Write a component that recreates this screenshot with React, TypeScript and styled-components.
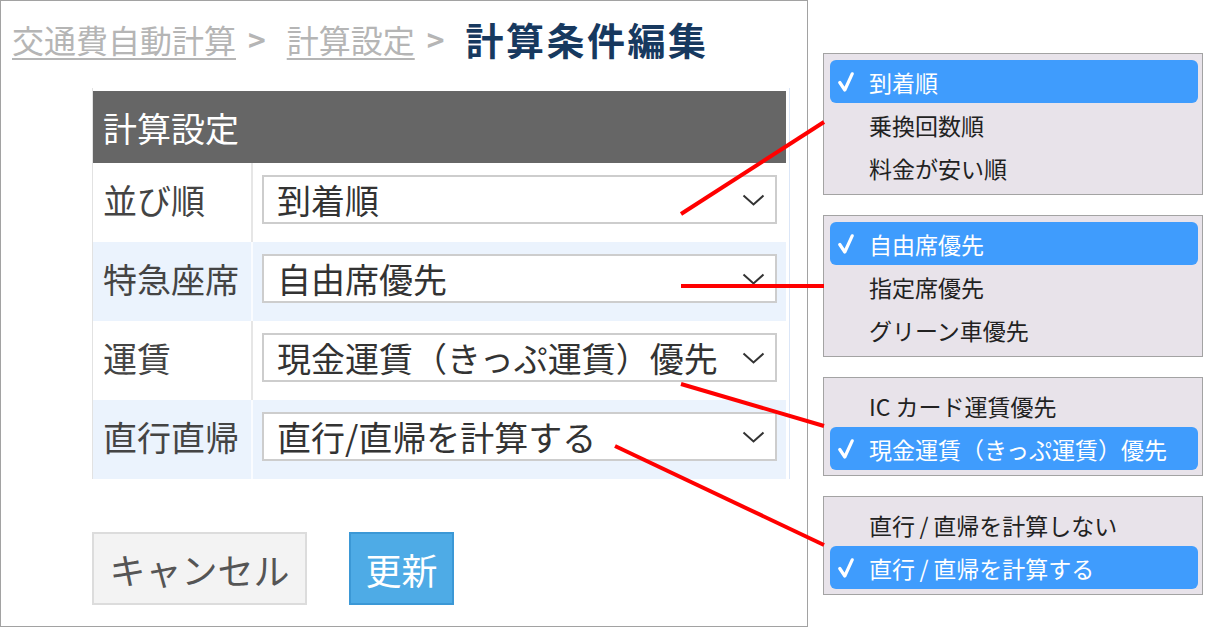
import React from 'react';
import styled, { createGlobalStyle } from 'styled-components';

const jp = `'Noto Sans CJK JP', 'Noto Sans', sans-serif`;

const GlobalStyle = createGlobalStyle`
  html, body {
    margin: 0;
    padding: 0;
    background: #fff;
  }
  body {
    font-family: ${jp};
  }
  * {
    box-sizing: border-box;
  }
`;

interface SettingRow {
  label: string;
  value: string;
  tint: boolean;
}

const rows: SettingRow[] = [
  { label: '並び順', value: '到着順', tint: false },
  { label: '特急座席', value: '自由席優先', tint: true },
  { label: '運賃', value: '現金運賃（きっぷ運賃）優先', tint: false },
  { label: '直行直帰', value: '直行/直帰を計算する', tint: true },
];

interface MenuSpec {
  options: string[];
  selected: number;
}

const menus: MenuSpec[] = [
  { options: ['到着順', '乗換回数順', '料金が安い順'], selected: 0 },
  { options: ['自由席優先', '指定席優先', 'グリーン車優先'], selected: 0 },
  { options: ['IC カード運賃優先', '現金運賃（きっぷ運賃）優先'], selected: 1 },
  { options: ['直行\u2009/\u2009直帰を計算しない', '直行\u2009/\u2009直帰を計算する'], selected: 1 },
];

// leader lines from each select to its open menu
const leaders = [
  { x1: 681, y1: 214, x2: 824, y2: 122 },
  { x1: 681, y1: 286, x2: 824, y2: 286 },
  { x1: 681, y1: 384, x2: 824, y2: 426 },
  { x1: 615, y1: 446, x2: 824, y2: 545 },
];

const Chevron = () => (
  <svg width="23" height="12" viewBox="0 0 23 12" fill="none">
    <polyline points="1.5,1.5 11.5,10.5 21.5,1.5" stroke="#333" strokeWidth="2" />
  </svg>
);

const Check = () => (
  <svg width="16" height="20" viewBox="0 0 16 20" fill="none">
    <polyline
      points="1.8,10.5 6.8,18 14.2,1.8"
      stroke="#fff"
      strokeWidth="3.2"
      strokeLinecap="round"
      strokeLinejoin="round"
    />
  </svg>
);

export default function App() {
  return (
    <>
      <GlobalStyle />
      <Canvas>
        <Panel>
          <Breadcrumb>
            <Crumb>交通費自動計算</Crumb>
            <Sep>&gt;</Sep>
            <Crumb>計算設定</Crumb>
            <Sep>&gt;</Sep>
            <Current>計算条件編集</Current>
          </Breadcrumb>

          <Table>
            <HeaderCell>計算設定</HeaderCell>
            {rows.map((row) => (
              <Row key={row.label} tint={row.tint}>
                <LabelCell tint={row.tint}>{row.label}</LabelCell>
                <ValueCell>
                  <Select>
                    <span>{row.value}</span>
                    <Chevron />
                  </Select>
                </ValueCell>
              </Row>
            ))}
          </Table>

          <Actions>
            <CancelButton type="button">キャンセル</CancelButton>
            <SubmitButton type="button">更新</SubmitButton>
          </Actions>
        </Panel>

        <MenuColumn>
          {menus.map((menu, i) => (
            <Menu key={i}>
              {menu.options.map((option, j) => (
                <MenuItem key={option} selected={j === menu.selected}>
                  <CheckSlot>{j === menu.selected && <Check />}</CheckSlot>
                  {option}
                </MenuItem>
              ))}
            </Menu>
          ))}
        </MenuColumn>

        <Leaders width="1206" height="628" viewBox="0 0 1206 628">
          {leaders.map((l, i) => (
            <line key={i} {...l} stroke="#ff0000" strokeWidth="4" />
          ))}
        </Leaders>
      </Canvas>
    </>
  );
}

const Canvas = styled.div`
  position: relative;
  width: 1206px;
  height: 628px;
  display: flex;
  align-items: flex-start;
  overflow: hidden;
`;

const Panel = styled.div`
  width: 808px;
  height: 627px;
  border: 1px solid #a2a2a2;
  display: flex;
  flex-direction: column;
  flex-shrink: 0;
`;

const Breadcrumb = styled.div`
  height: 87px;
  padding: 0 0 12px 11px;
  display: flex;
  align-items: center;
  white-space: nowrap;
`;

const Crumb = styled.span`
  font-size: 32px;
  color: #b5b5b5;
  text-decoration: underline;
  text-decoration-thickness: 2px;
  text-underline-offset: 5px;
`;

const Sep = styled.span`
  font-size: 30px;
  font-weight: 700;
  color: #b5b5b5;
  margin: 0 21px 0 12px;
`;

const Current = styled.span`
  font-size: 38px;
  font-weight: 700;
  color: #17395f;
  letter-spacing: 2.5px;
`;

const Table = styled.div`
  margin-left: 91px;
  width: 698px;
  padding: 3px 3px 0 0;
  border-left: 1px solid #e2e2e2;
  border-right: 1px solid #dbe6f7;
`;

const HeaderCell = styled.div`
  height: 72px;
  background: #666;
  color: #fff;
  font-size: 34px;
  display: flex;
  align-items: center;
  padding-left: 10px;
`;

const Row = styled.div<{ tint: boolean }>`
  height: 79px;
  display: grid;
  grid-template-columns: 160px 1fr;
  background: ${({ tint }) => (tint ? '#ebf3fd' : '#fff')};
`;

const LabelCell = styled.div<{ tint: boolean }>`
  display: flex;
  align-items: center;
  padding: 0 0 6px 10px;
  font-size: 34px;
  color: #444;
  border-right: 2px solid ${({ tint }) => (tint ? '#fafcff' : '#e6e6e6')};
`;

const ValueCell = styled.div`
  display: flex;
  align-items: center;
  padding: 0 9px 6px 9px;
`;

const Select = styled.div`
  flex: 1;
  height: 49px;
  background: #fff;
  border: 2px solid #cdcdcd;
  display: flex;
  align-items: center;
  justify-content: space-between;
  padding: 0 10px 0 13px;
  font-size: 34px;
  color: #333;
  white-space: nowrap;

  svg {
    flex-shrink: 0;
  }
`;

const Actions = styled.div`
  margin: 53px 0 0 91px;
  display: flex;
  gap: 42px;
`;

const BaseButton = styled.button`
  height: 73px;
  font-family: ${jp};
  font-size: 36px;
  padding: 0;
  cursor: pointer;
`;

const CancelButton = styled(BaseButton)`
  width: 215px;
  background: #f3f3f3;
  border: 2px solid #dcdcdc;
  color: #555;
`;

const SubmitButton = styled(BaseButton)`
  width: 105px;
  background: #4eabe6;
  border: 2px solid #3b98d6;
  color: #fff;
`;

const MenuColumn = styled.div`
  margin-left: 15px;
  padding-top: 53px;
  width: 380px;
  display: flex;
  flex-direction: column;
  gap: 20px;
`;

const Menu = styled.div`
  background: #e8e3ea;
  border: 1px solid #a3a3a3;
  padding: 6px 4px 5px 6px;
`;

const MenuItem = styled.div<{ selected: boolean }>`
  height: 43px;
  display: flex;
  align-items: center;
  padding-left: 8px;
  border-radius: 6px;
  font-size: 23px;
  white-space: nowrap;
  color: ${({ selected }) => (selected ? '#fff' : '#222')};
  background: ${({ selected }) => (selected ? '#3f9cfd' : 'transparent')};
`;

const CheckSlot = styled.span`
  width: 31px;
  display: flex;
  align-items: center;
`;

const Leaders = styled.svg`
  position: absolute;
  top: 0;
  left: 0;
  pointer-events: none;
`;
